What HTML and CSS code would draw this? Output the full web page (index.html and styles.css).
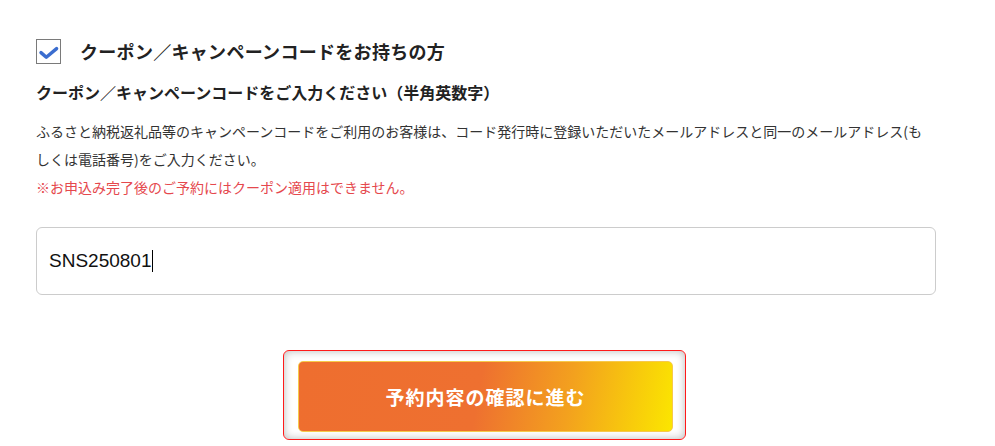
FILE: index.html
```html
<!DOCTYPE html>
<html lang="ja">
<head>
<meta charset="utf-8">
<title>クーポン</title>
<link rel="stylesheet" href="styles.css">
</head>
<body>
<div class="wrap">
  <div class="check-row">
    <span class="checkbox">
      <svg width="25" height="25" viewBox="0 0 25 25"><path d="M5 13.6 L10.3 18.2 L20.6 9.6" fill="none" stroke="#3b6dcf" stroke-width="3.4" stroke-linecap="round" stroke-linejoin="round"/></svg>
    </span>
    <span class="check-label">クーポン／キャンペーンコードをお持ちの方</span>
  </div>
  <h2 class="sub">クーポン／キャンペーンコードをご入力ください（半角英数字）</h2>
  <p class="note">ふるさと納税返礼品等のキャンペーンコードをご利用のお客様は、コード発行時に登録いただいたメールアドレスと同一のメールアドレス(もしくは電話番号)をご入力ください。<br><span class="warn">※お申込み完了後のご予約にはクーポン適用はできません。</span></p>
  <div class="field"><span class="value">SNS250801</span><span class="caret"></span></div>
  <div class="actions">
    <div class="btn-frame">
      <button class="btn" type="button">予約内容の確認に進む</button>
    </div>
  </div>
</div>
</body>
</html>
```

FILE: styles.css
```css
html, body {
  margin: 0;
  padding: 0;
  background: #fff;
}
body {
  font-family: "Noto Sans CJK JP", "Noto Sans", sans-serif;
  color: #333;
}
.wrap {
  width: 900px;
  padding: 39px 0 0 36px;
}
.check-row {
  display: flex;
  align-items: center;
  gap: 19px;
  height: 25px;
}
.checkbox {
  width: 25px;
  height: 25px;
  box-sizing: border-box;
  border: 1.5px solid #7a7a7a;
  background: #fff;
  position: relative;
}
.checkbox svg {
  position: absolute;
  left: -1.5px;
  top: -1.5px;
}
.check-label {
  font-size: 18px;
  font-weight: 700;
  color: #222;
  line-height: 25px;
  letter-spacing: 0.3px;
}
.sub {
  margin: 16px 0 0;
  font-size: 16px;
  font-weight: 700;
  line-height: 24px;
  color: #222;
}
.note {
  margin: 13px 0 0;
  font-size: 14px;
  line-height: 28px;
  color: #333;
}
.warn {
  color: #e5484d;
}
.field {
  margin-top: 26px;
  height: 68px;
  box-sizing: border-box;
  border: 1px solid #cccccc;
  border-radius: 6px;
  display: flex;
  align-items: center;
  padding-left: 12px;
  font-family: "Liberation Sans", Arial, sans-serif;
  font-size: 19px;
  color: #111;
}
.caret {
  display: inline-block;
  width: 1px;
  height: 22px;
  background: #000;
  margin-left: 1px;
}
.actions {
  margin-top: 55px;
  display: flex;
  justify-content: center;
}
.btn-frame {
  width: 403px;
  height: 90px;
  box-sizing: border-box;
  border: 1.5px solid #ff1a1a;
  border-radius: 6px;
  box-shadow: inset 0 0 9px rgba(0, 0, 0, 0.28);
  padding: 10px 12px 7px 14px;
  margin-left: -3px;
}
.btn {
  width: 100%;
  height: 100%;
  border: 1px solid #f7c94a;
  border-radius: 5px;
  background: linear-gradient(100deg, #ee6e2f 0%, #ee7030 48%, #f3a11e 72%, #fbe600 100%);
  color: #fff;
  font-family: "Noto Sans CJK JP", sans-serif;
  font-size: 19px;
  font-weight: 700;
  letter-spacing: 1px;
  cursor: pointer;
  padding: 0;
}
```
